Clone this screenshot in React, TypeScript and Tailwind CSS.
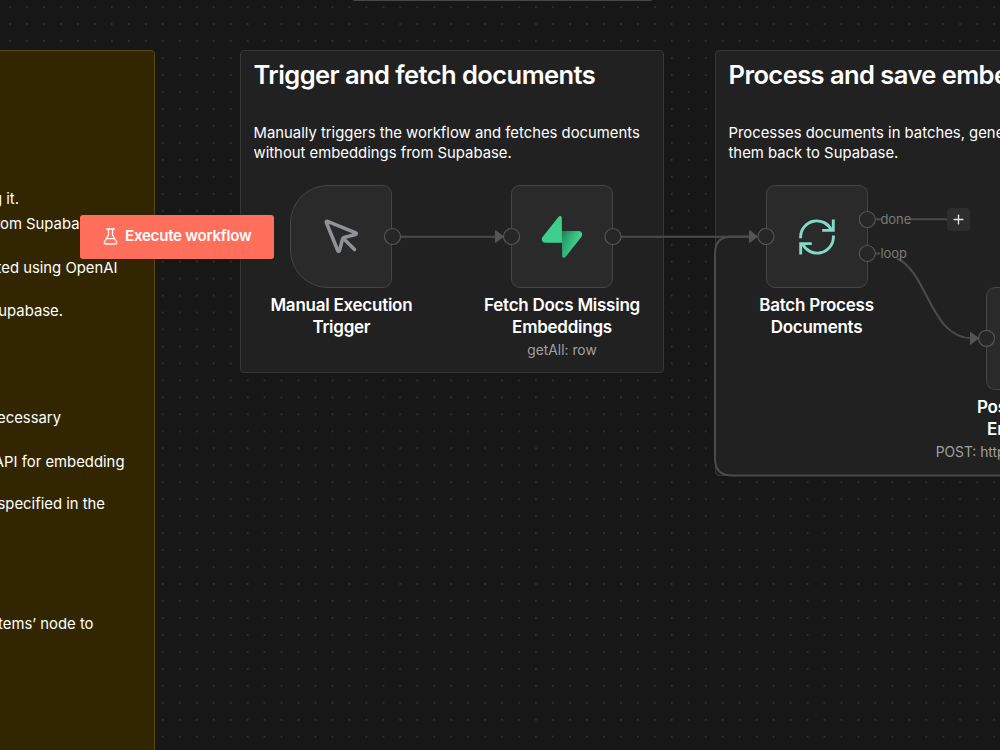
import { MousePointer, Plus } from "lucide-react";
import type { ReactNode } from "react";

interface NoteProps {
  title: string;
  className: string;
  children: ReactNode;
}

interface NodeProps {
  title: ReactNode;
  subtitle?: string;
  position: string;
  shape?: string;
  children?: ReactNode;
}

const noteLines = [
  { text: "before running it.", className: "top-[188px] w-[19px]" },
  { text: "from Supabase", className: "top-[213px] w-[96px]" },
  { text: "created using OpenAI", className: "top-[257px] w-[117.5px]" },
  { text: "Supabase.", className: "top-[300px] w-[63px]" },
  { text: "necessary", className: "top-[407px] w-[61px]" },
  { text: "API for embedding", className: "top-[451px] w-[124.5px]" },
  { text: "specified in the", className: "top-[493px] w-[105px]" },
  { text: "Items’ node to", className: "top-[613px] w-[93.5px]" },
];

const handles = [
  { x: 392.5, y: 236.5 },
  { x: 511.5, y: 236.5 },
  { x: 613, y: 236.5 },
  { x: 766, y: 236.5 },
  { x: 867.3, y: 219.5 },
  { x: 867.3, y: 253.5 },
  { x: 986.5, y: 338.3 },
];

function Note({ title, className, children }: NoteProps) {
  return (
    <section className={`absolute rounded border border-[#363636] bg-[#212121] px-[13px] pt-[8px] text-white ${className}`}>
      <h2 className="whitespace-nowrap text-[25.5px] font-semibold leading-8 tracking-[-0.56px]">{title}</h2>
      <p className="mt-[32px] whitespace-nowrap text-[14.85px] leading-5">{children}</p>
    </section>
  );
}

function WorkflowNode({ title, subtitle, position, shape = "rounded-[9px]", children }: NodeProps) {
  return (
    <div className={`absolute flex w-[102px] flex-col items-center ${position}`}>
      <div className={`flex h-[103px] w-[102px] shrink-0 items-center justify-center border border-[#454545] bg-[#2a2a2a] ${shape}`}>{children}</div>
      <p className="mt-[6px] whitespace-nowrap text-center text-[17px] font-semibold leading-[22px] tracking-[-0.25px] text-white">{title}</p>
      {subtitle && <p className="mt-[2px] whitespace-nowrap text-[13.8px] leading-5 text-[#a0a0a0]">{subtitle}</p>}
    </div>
  );
}

function SupabaseIcon() {
  return (
    <svg width="42" height="42" viewBox="0 0 109 113" fill="none">
      <defs>
        <linearGradient id="bolt" x1="54" y1="55" x2="94" y2="72" gradientUnits="userSpaceOnUse">
          <stop stopColor="#249361" />
          <stop offset="1" stopColor="#3ECF8E" />
        </linearGradient>
        <linearGradient id="shade" x1="36" y1="30.6" x2="54.5" y2="65" gradientUnits="userSpaceOnUse">
          <stop />
          <stop offset="1" stopOpacity="0" />
        </linearGradient>
      </defs>
      <path d="M63.7 110.3c-2.9 3.6-8.7 1.6-8.7-3l-1-67.2h45.2c8.2 0 12.8 9.4 7.7 15.8z" fill="url(#bolt)" />
      <path d="M63.7 110.3c-2.9 3.6-8.7 1.6-8.7-3l-1-67.2h45.2c8.2 0 12.8 9.4 7.7 15.8z" fill="url(#shade)" fillOpacity=".2" />
      <path d="M45.3 2.1c2.9-3.6 8.7-1.7 8.7 2.9l.5 67.3H9.8c-8.2 0-12.7-9.5-7.6-15.9z" fill="#3ECF8E" />
    </svg>
  );
}

function LoopIcon() {
  return (
    <svg width="38" height="38" viewBox="0 0 38 38" fill="none" stroke="#82dcc5" strokeWidth="2.9">
      <path d="M2.6 20.2V19a16.2 16.2 0 0 1 31-6.5" />
      <path d="M35.4 17.6V19a16.2 16.2 0 0 1-31 6.5" />
      <path d="M35.3 1.6v10.8H24.2M2.7 36.4V25.6h11.1" />
    </svg>
  );
}

function FlaskIcon() {
  return (
    <svg width="15" height="17" viewBox="0 0 15 17" fill="none" stroke="white" strokeWidth="1.3" strokeLinejoin="round" strokeLinecap="round">
      <path d="M3.6 1h7.8M5.5 1v5.7L1.5 14q-.8 2 1.2 2h9.6q2 0 1.2-2l-4-7.3V1M3.9 10.6h7.2" />
    </svg>
  );
}

function Edges() {
  return (
    <svg className="absolute inset-0" width="1000" height="750" fill="none" stroke="#4b4b4b" strokeWidth="2">
      <path d="M400.500 236.700H498M621 236.700H752M876 219.300h5M911 219.300h36M876 253.500h4" />
      <path d="M897 258.500C928 272 930 338 972 338.300" />
      <path d="M1000 475.500H732q-17 0-17-17V253.500q0-17 17-17h22" />
      <g fill="#555" stroke="#555" strokeWidth="1" strokeLinejoin="round">
        <path d="M495.500 230.500v12l8-6zM749.500 230.500v12l8-6zM970.500 332.300v12l8-6z" />
      </g>
      <g fill="#262626" stroke="#565656" strokeWidth="1.200">
        {handles.map(({ x, y }) => (
          <circle key={`${x}-${y}`} cx={x} cy={y} r="8" />
        ))}
      </g>
    </svg>
  );
}

export default function App() {
  return (
    <main className="relative h-[750px] w-[1000px] overflow-hidden bg-[#171717] font-['Inter',sans-serif]">
      <svg className="absolute inset-0" width="1000" height="750">
        <pattern id="dots" x="153.900" y="-1.800" width="16.967" height="16.967" patternUnits="userSpaceOnUse">
          <circle cx="8.900" cy="8.900" r=".65" fill="#5c5c5c" />
        </pattern>
        <rect width="1000" height="750" fill="url(#dots)" />
      </svg>
      <div className="absolute -top-10 left-[351px] h-[41px] w-[303px] rounded border border-[#484848] bg-[#222]" />

      <section className="absolute -left-10 top-[50px] h-[720px] w-[195px] rounded border border-[#5b4a0c] bg-[#322600]" />
      {noteLines.map((line) => (
        <div key={line.text} className={`absolute left-0 flex justify-end overflow-hidden whitespace-nowrap text-[14.85px] leading-[22px] text-white ${line.className}`}>
          {line.text}
        </div>
      ))}

      <Note title="Trigger and fetch documents" className="left-[239.5px] top-[50px] h-[323px] w-[424.5px]">
        Manually triggers the workflow and fetches documents
        <br />
        without embeddings from Supabase.
      </Note>
      <Note title="Process and save embeddings" className="left-[714.5px] top-[50px] h-[426px] w-[640px]">
        Processes documents in batches, generates embeddings, and saves
        <br />
        them back to Supabase.
      </Note>

      <WorkflowNode position="left-[290.4px] top-[185px]" shape="rounded-l-[38px] rounded-r-[9px]" title={<>Manual Execution<br />Trigger</>}>
        <MousePointer size={42.4} className="translate-x-px translate-y-px text-[#909298]" />
      </WorkflowNode>
      <WorkflowNode position="left-[511px] top-[185px]" title={<>Fetch Docs Missing<br />Embeddings</>} subtitle="getAll: row">
        <SupabaseIcon />
      </WorkflowNode>
      <WorkflowNode position="left-[765.5px] top-[185px]" title={<>Batch Process<br />Documents</>}>
        <LoopIcon />
      </WorkflowNode>
      <WorkflowNode position="left-[986px] top-[287px]" title={<>Post OpenAI....<br />Embeddings</>} subtitle="POST: https://api.openai.com..." />

      <Edges />

      <span className="absolute left-[880.5px] top-[210px] text-[13px] leading-[18px] tracking-[-0.1px] text-[#7b7b7b]">done</span>
      <span className="absolute left-[880.5px] top-[244px] text-[13px] leading-[18px] tracking-[-0.1px] text-[#7b7b7b]">loop</span>
      <button type="button" className="absolute left-[947px] top-[208px] flex h-[23px] w-[23px] items-center justify-center rounded bg-[#2d2d2d] text-[#e2e2e2]">
        <Plus size={15} strokeWidth={2.2} />
      </button>

      <button type="button" className="absolute left-[80px] top-[215px] flex h-[44px] w-[193.5px] items-center gap-[7px] rounded-[3px] bg-[#ff6f5c] pb-[2px] pl-[23px] text-[15.1px] font-semibold tracking-[-0.24px] text-white">
        <FlaskIcon />
        <span className="whitespace-nowrap">Execute workflow</span>
      </button>
    </main>
  );
}
